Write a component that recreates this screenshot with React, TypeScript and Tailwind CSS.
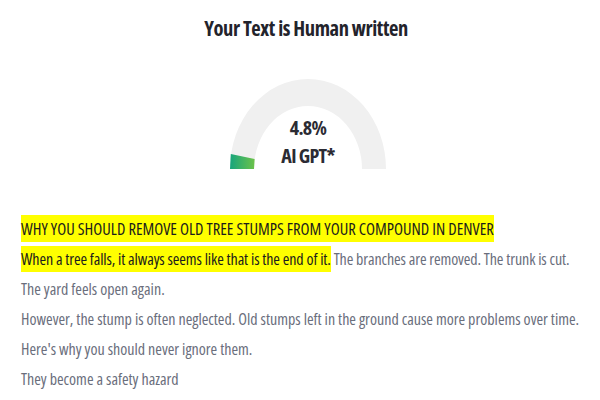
import React from 'react';

const lines = [
  'The yard feels open again.',
  'However, the stump is often neglected. Old stumps left in the ground cause more problems over time.',
  "Here's why you should never ignore them.",
  'They become a safety hazard',
];

function Gauge() {
  // squashed half-ring, 4.8% filled from the left
  return (
    <svg width="158" height="92" viewBox="0 0 158 92" className="block">
      <defs>
        <linearGradient id="fill" x1="0" x2="1" y1="0" y2="0">
          <stop offset="0%" stopColor="#17a57d" />
          <stop offset="100%" stopColor="#6cc24a" />
        </linearGradient>
      </defs>
      <path
        d="M1 91 A78 90 0 0 1 157 91 L133 91 A54 63 0 0 0 25 91 Z"
        fill="#f0f0f0"
      />
      <path d="M1 91 L1.8 76 L25.6 81 L25 91 Z" fill="url(#fill)" />
    </svg>
  );
}

export default function App() {
  return (
    <div
      className="w-[600px] h-[400px] bg-white overflow-hidden [font-stretch:75%]"
      style={{ fontFamily: '"Open Sans", "Noto Sans", sans-serif' }}
    >
      <h1 className="pt-[14px] pl-[12px] text-center text-[20.5px] leading-[28px] font-bold tracking-[-0.4px] text-[#23232b]">
        Your Text is Human written
      </h1>

      <div className="relative mt-[36px] w-[158px] h-[92px] ml-[229px]">
        <Gauge />
        <div className="absolute inset-x-0 top-[36px] text-center text-[20px] leading-[28px] font-bold tracking-[-0.7px] text-[#2b2b33]">
          <div>4.8%</div>
          <div>AI GPT*</div>
        </div>
      </div>

      <div className="mt-[44px] pl-[21px] text-[16px] leading-[30px]">
        <p className="text-[16.5px]">
          <span className="bg-[#ffff00] text-[#1c1c1c] py-[2px]">
            WHY YOU SHOULD REMOVE OLD TREE STUMPS FROM YOUR COMPOUND IN DENVER
          </span>
        </p>
        <p className="text-[#6a6e7c] tracking-[-0.1px]">
          <span className="bg-[#ffff00] text-[#1c1c1c] py-[2px]">
            When a tree falls, it always seems like that is the end of it.
          </span>{' '}
          The branches are removed. The trunk is cut.
        </p>
        {lines.map((l) => (
          <p key={l} className="text-[#6a6e7c]">
            {l}
          </p>
        ))}
      </div>
    </div>
  );
}
